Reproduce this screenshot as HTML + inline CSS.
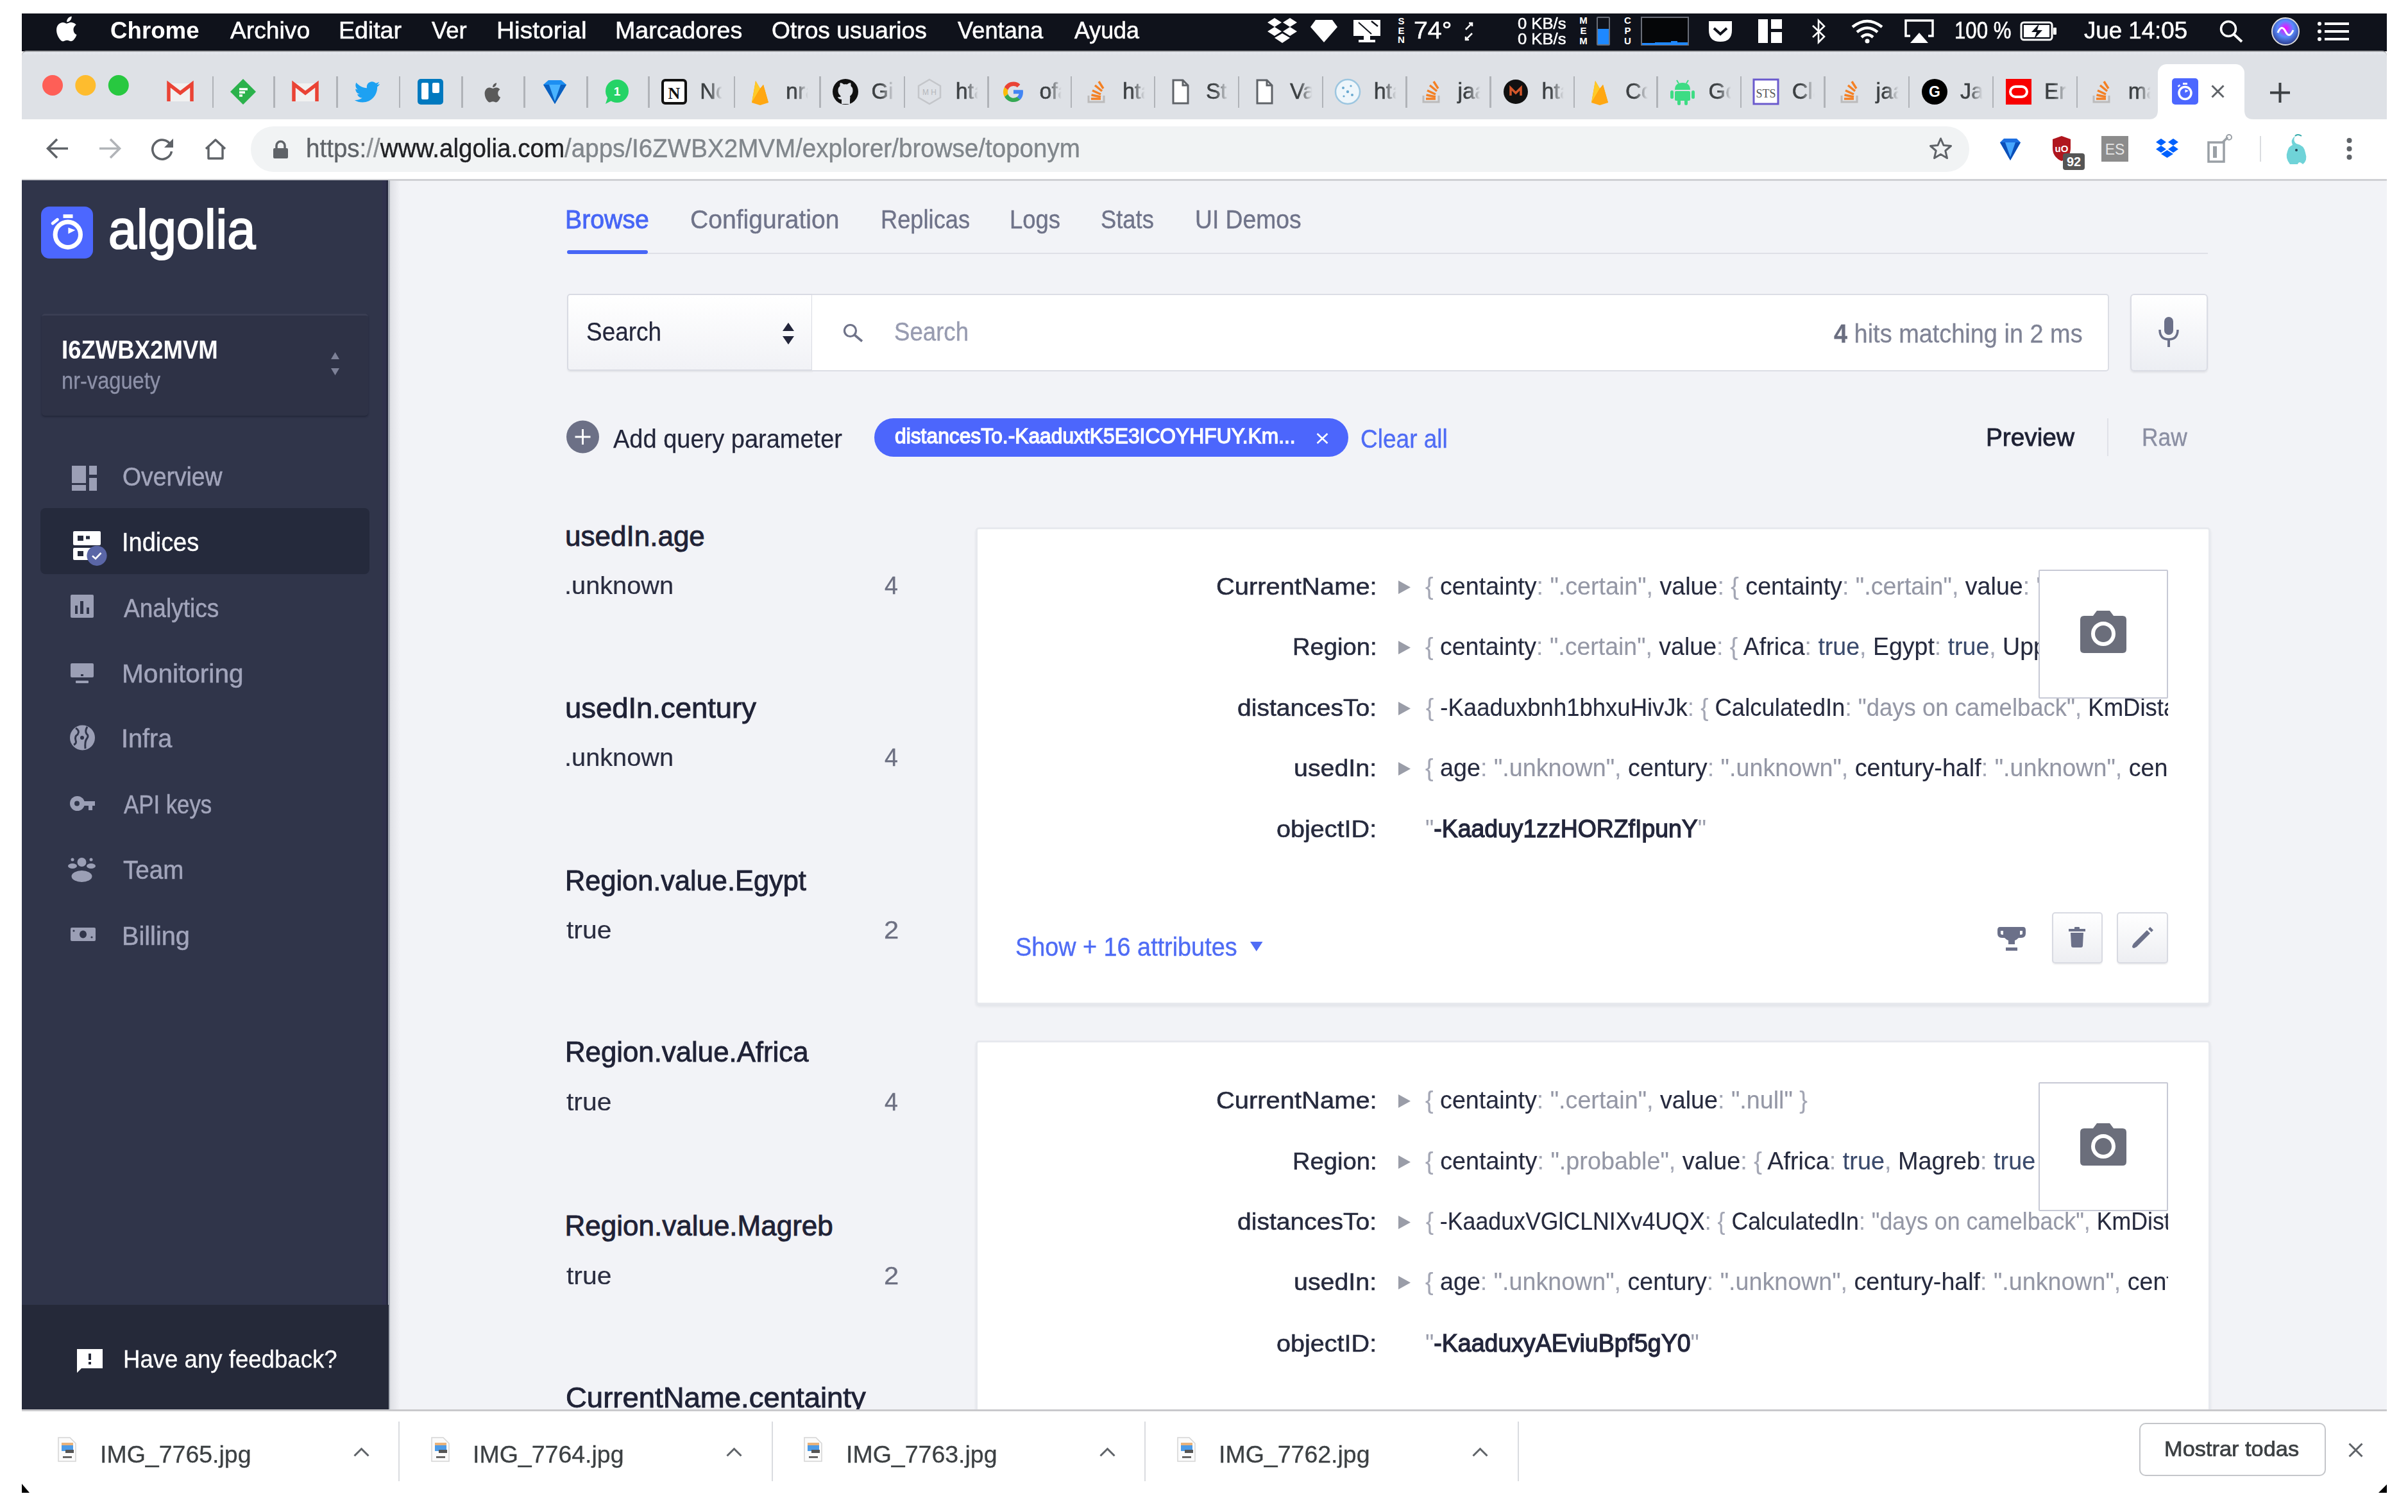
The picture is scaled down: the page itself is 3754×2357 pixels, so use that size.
<!DOCTYPE html>
<html><head><meta charset="utf-8"><style>
html,body{margin:0;padding:0;}
body{width:3754px;height:2357px;position:relative;overflow:hidden;background:#fff;font-family:"Liberation Sans",sans-serif;}
.t{position:absolute;white-space:nowrap;transform-origin:0 0;}
svg{overflow:visible}
</style></head><body>
<div style="position:absolute;left:34.0px;top:21.0px;width:3687.0px;height:59.0px;background:#0f121b;"></div>
<div style="position:absolute;left:34.0px;top:78.5px;width:3687.0px;height:107.5px;background:#a3a5a8;border-radius:7px 7px 0 0;"></div>
<div style="position:absolute;left:34.0px;top:80.5px;width:3687.0px;height:105.5px;background:linear-gradient(#e6e9ef,#dee1e6 5px);border-radius:6px 6px 0 0;"></div>
<div style="position:absolute;left:34.0px;top:186.0px;width:3687.0px;height:94.0px;background:#fff;"></div>
<div style="position:absolute;left:34.0px;top:279.0px;width:3687.0px;height:3.0px;background:#cfd0d4;"></div>
<div style="position:absolute;left:606.0px;top:282.0px;width:3115.0px;height:1916.0px;background:#f2f3f7;"></div>
<div style="position:absolute;left:34.0px;top:281.0px;width:572.0px;height:1917.0px;background:#30354a;"></div>
<div style="position:absolute;left:596.0px;top:281.0px;width:6.0px;height:1917.0px;background:#30324d;"></div>
<div style="position:absolute;left:602.0px;top:281.0px;width:3.0px;height:1917.0px;background:#272a40;"></div>
<div style="position:absolute;left:605.0px;top:281.0px;width:3.0px;height:1917.0px;background:#a7adb6;"></div>
<div style="position:absolute;left:608.0px;top:282.0px;width:16.0px;height:1916.0px;background:linear-gradient(90deg,rgba(20,24,40,.09),rgba(20,24,40,0));"></div>
<div style="position:absolute;left:34.0px;top:2034.0px;width:572.0px;height:164.0px;background:#252939;"></div>
<svg style="position:absolute;left:86.0px;top:24.0px;" width="35.0" height="42.0" viewBox="0 0 35 42"><path fill="#fff" d="M28.5 22.3c0-5 4-7.4 4.2-7.5-2.3-3.4-5.9-3.8-7.1-3.9-3-.3-5.9 1.8-7.4 1.8-1.5 0-3.9-1.7-6.4-1.7C8.5 11.1 5.4 13 3.7 16c-3.4 5.9-.9 14.7 2.4 19.5 1.6 2.3 3.5 5 6.1 4.9 2.4-.1 3.4-1.6 6.3-1.6 2.9 0 3.8 1.6 6.4 1.5 2.6 0 4.3-2.4 5.9-4.7 1.9-2.7 2.6-5.3 2.7-5.4-.1 0-5-1.9-5-7.9zM23.7 7.6c1.3-1.6 2.2-3.8 2-6.1-1.9.1-4.2 1.3-5.6 2.9-1.2 1.4-2.3 3.7-2 5.9 2.1.2 4.3-1.1 5.6-2.7z"/></svg>
<div class="t" style="left:172.1px;top:29.4px;font-size:37.80px;line-height:37.80px;color:#fff;font-weight:bold;transform:scaleX(0.9710);">Chrome</div>
<div class="t" style="left:359.0px;top:29.4px;font-size:37.80px;line-height:37.80px;color:#fff;-webkit-text-stroke-width:0.6px;transform:scaleX(0.9851);">Archivo</div>
<div class="t" style="left:527.7px;top:29.4px;font-size:37.80px;line-height:37.80px;color:#fff;-webkit-text-stroke-width:0.6px;transform:scaleX(0.9919);">Editar</div>
<div class="t" style="left:673.4px;top:29.4px;font-size:37.80px;line-height:37.80px;color:#fff;-webkit-text-stroke-width:0.6px;transform:scaleX(0.9653);">Ver</div>
<div class="t" style="left:773.5px;top:29.4px;font-size:37.80px;line-height:37.80px;color:#fff;-webkit-text-stroke-width:0.6px;transform:scaleX(1.0300);">Historial</div>
<div class="t" style="left:958.5px;top:29.4px;font-size:37.80px;line-height:37.80px;color:#fff;-webkit-text-stroke-width:0.6px;transform:scaleX(0.9932);">Marcadores</div>
<div class="t" style="left:1203.3px;top:29.4px;font-size:37.80px;line-height:37.80px;color:#fff;-webkit-text-stroke-width:0.6px;transform:scaleX(0.9841);">Otros usuarios</div>
<div class="t" style="left:1492.8px;top:29.4px;font-size:37.80px;line-height:37.80px;color:#fff;-webkit-text-stroke-width:0.6px;transform:scaleX(0.9600);">Ventana</div>
<div class="t" style="left:1674.5px;top:29.4px;font-size:37.80px;line-height:37.80px;color:#fff;-webkit-text-stroke-width:0.6px;transform:scaleX(0.9482);">Ayuda</div>
<svg style="position:absolute;left:1974.6px;top:27.0px;" width="48.0" height="42.0" viewBox="0 0 48 42"><g fill="#fff"><path d="M12 1L1 8L12 15L23 8Z"/><path d="M36 1L25 8L36 15L47 8Z"/><path d="M1 22L12 29L23 22L12 15Z"/><path d="M47 22L36 29L25 22L36 15Z"/><path d="M12 32L24 40L36 32L24 25Z"/></g></svg>
<svg style="position:absolute;left:2043.0px;top:30.0px;" width="42.0" height="36.0" viewBox="0 0 42 36"><path d="M8 1H34L42 12L21 36L0 12Z" fill="#fff"/></svg>
<svg style="position:absolute;left:2107.5px;top:29.0px;" width="46.0" height="38.0" viewBox="0 0 46 38"><path d="M2 2H44V27H2Z" fill="#fff"/><path d="M18 27H28V33H36V37H10V33H18Z" fill="#fff"/><path d="M10 6L30 24" stroke="#0f121b" stroke-width="2"/><path d="M30 4L40 12" stroke="#0f121b" stroke-width="2.5"/></svg>
<div class="t" style="left:2176px;top:26px;font-size:15px;line-height:14.5px;color:#fff;font-weight:bold;width:17px;text-align:center;white-space:normal;">S<br>E<br>N</div>
<div class="t" style="left:2204.0px;top:29.4px;font-size:37.80px;line-height:37.80px;color:#fff;-webkit-text-stroke-width:0.6px;transform:scaleX(1.0393);">74°</div>
<svg style="position:absolute;left:2282.0px;top:34.0px;" width="16.0" height="30.0" viewBox="0 0 16 30"><path d="M3 12L13 2M8 2H13V7M13 18L3 28M3 23V28H8" fill="none" stroke="#fff" stroke-width="2.5"/></svg>
<div class="t" style="left:2366.0px;top:26.2px;font-size:23.00px;line-height:23.00px;color:#fff;-webkit-text-stroke-width:0.5px;transform:scaleX(1.1135);">0 KB/s</div>
<div class="t" style="left:2366.0px;top:50.2px;font-size:23.00px;line-height:23.00px;color:#fff;-webkit-text-stroke-width:0.5px;transform:scaleX(1.1135);">0 KB/s</div>
<div class="t" style="left:2460px;top:24px;font-size:15px;line-height:16px;color:#fff;font-weight:bold;width:17px;text-align:center;white-space:normal;">M<br>E<br>M</div>
<div style="position:absolute;left:2488.7px;top:25.7px;width:21.3px;height:45.7px;border:2px solid #6a6e78;box-sizing:border-box;border-radius:2px;"></div>
<div style="position:absolute;left:2491.0px;top:45.0px;width:17.0px;height:24.0px;background:#1e88ff;"></div>
<div class="t" style="left:2530px;top:24px;font-size:15px;line-height:16px;color:#fff;font-weight:bold;width:15px;text-align:center;white-space:normal;">C<br>P<br>U</div>
<div style="position:absolute;left:2558.0px;top:25.7px;width:75.0px;height:45.7px;border:2px solid #6a6e78;box-sizing:border-box;background:#050608;"></div>
<svg style="position:absolute;left:2560.0px;top:62.0px;" width="71.0" height="8.0" viewBox="0 0 71 8"><path d="M0 8V5H20V4H45V2H55V4H71V8Z" fill="#1e88ff"/></svg>
<svg style="position:absolute;left:2662.0px;top:31.0px;" width="40.0" height="36.0" viewBox="0 0 40 36"><path d="M2 2H38V16Q38 34 20 34Q2 34 2 16Z" fill="#fff"/><path d="M10 13L20 22L30 13" fill="none" stroke="#0f121b" stroke-width="4"/></svg>
<svg style="position:absolute;left:2741.0px;top:30.0px;" width="37.0" height="37.0" viewBox="0 0 37 37"><g fill="#fff"><rect x="0" y="0" width="15" height="37"/><rect x="20" y="0" width="17" height="15"/><rect x="20" y="20" width="17" height="17"/></g></svg>
<svg style="position:absolute;left:2822.5px;top:30.0px;" width="25.0" height="38.0" viewBox="0 0 25 38"><path d="M3 10L21 27L12 36V2L21 11L3 28" fill="none" stroke="#fff" stroke-width="2.6"/></svg>
<svg style="position:absolute;left:2884.8px;top:30.0px;" width="52.0" height="38.0" viewBox="0 0 52 38"><g fill="none" stroke="#fff" stroke-width="4.5"><path d="M3 12Q26 -6 49 12"/><path d="M10 20Q26 7 42 20"/><path d="M17 28Q26 20 35 28"/></g><circle cx="26" cy="34" r="3.5" fill="#fff"/></svg>
<svg style="position:absolute;left:2968.0px;top:30.0px;" width="48.0" height="37.0" viewBox="0 0 48 37"><path d="M10 26H3V2H45V26H38" fill="none" stroke="#fff" stroke-width="3.5"/><path d="M10 37L24 21L38 37Z" fill="#fff"/></svg>
<div class="t" style="left:3046.7px;top:29.4px;font-size:37.80px;line-height:37.80px;color:#fff;-webkit-text-stroke-width:0.6px;transform:scaleX(0.8252);">100 %</div>
<svg style="position:absolute;left:3148.5px;top:33.0px;" width="58.0" height="31.0" viewBox="0 0 58 31"><rect x="2" y="2" width="48" height="27" rx="4" fill="none" stroke="#fff" stroke-width="3"/><rect x="52" y="10" width="5" height="11" rx="1" fill="#fff"/><rect x="6" y="6" width="40" height="19" fill="#fff"/><path d="M30 4L18 17H26L22 28L35 14H27Z" fill="#0f121b"/></svg>
<div class="t" style="left:3249.4px;top:29.4px;font-size:37.80px;line-height:37.80px;color:#fff;-webkit-text-stroke-width:0.6px;transform:scaleX(0.9703);">Jue 14:05</div>
<svg style="position:absolute;left:3460.0px;top:31.0px;" width="37.0" height="35.0" viewBox="0 0 37 35"><circle cx="14" cy="14" r="11.5" fill="none" stroke="#fff" stroke-width="3.5"/><path d="M22 22L35 34" stroke="#fff" stroke-width="4"/></svg>
<svg style="position:absolute;left:3541.0px;top:27.0px;" width="44.0" height="44.0" viewBox="0 0 44 44"><defs><radialGradient id="siri" cx="50%" cy="40%" r="60%"><stop offset="0" stop-color="#f0f"/><stop offset=".5" stop-color="#5a8cff"/><stop offset="1" stop-color="#2a3a8a"/></radialGradient></defs><circle cx="22" cy="22" r="21" fill="url(#siri)" stroke="#ddd" stroke-width="2"/><path d="M10 24Q16 10 22 22T34 20" fill="none" stroke="#fff" stroke-width="3"/></svg>
<svg style="position:absolute;left:3612.8px;top:34.0px;" width="49.0" height="30.0" viewBox="0 0 49 30"><g fill="#fff"><circle cx="3" cy="3" r="3"/><circle cx="3" cy="15" r="3"/><circle cx="3" cy="27" r="3"/><rect x="11" y="1" width="38" height="4"/><rect x="11" y="13" width="38" height="4"/><rect x="11" y="25" width="38" height="4"/></g></svg>
<svg style="position:absolute;left:65.7px;top:117.0px;" width="120.0" height="32.0" viewBox="0 0 120 32"><circle cx="16" cy="16" r="16" fill="#fe5f57"/><circle cx="67.3" cy="16" r="16" fill="#febc2e"/><circle cx="118.8" cy="16" r="16" fill="#28c840"/></svg>
<div style="position:absolute;left:330.7px;top:119.0px;width:2.6px;height:49.0px;background:#b0b3b8;"></div>
<div style="position:absolute;left:426.4px;top:119.0px;width:2.6px;height:49.0px;background:#b0b3b8;"></div>
<div style="position:absolute;left:524.0px;top:119.0px;width:2.6px;height:49.0px;background:#b0b3b8;"></div>
<div style="position:absolute;left:621.7px;top:119.0px;width:2.6px;height:49.0px;background:#b0b3b8;"></div>
<div style="position:absolute;left:719.2px;top:119.0px;width:2.6px;height:49.0px;background:#b0b3b8;"></div>
<div style="position:absolute;left:816.0px;top:119.0px;width:2.6px;height:49.0px;background:#b0b3b8;"></div>
<div style="position:absolute;left:914.4px;top:119.0px;width:2.6px;height:49.0px;background:#b0b3b8;"></div>
<div style="position:absolute;left:1010.0px;top:119.0px;width:2.6px;height:49.0px;background:#b0b3b8;"></div>
<svg style="position:absolute;left:260.0px;top:122.0px;" width="42.0" height="42.0" viewBox="0 0 42 42"><path d="M3 8H39V36H3Z" fill="#f1f1f1"/><path d="M3 36V9L21 23L39 9V36" fill="none" stroke="#ea4335" stroke-width="5.5" stroke-linejoin="miter"/></svg>
<svg style="position:absolute;left:357.7px;top:122.0px;" width="42.0" height="42.0" viewBox="0 0 42 42"><path d="M21 1L41 21L21 41L1 21Z" fill="#2bb24c" transform="translate(0,0) scale(1)"/><path d="M15 27H20M15 22H24M15 17H28" stroke="#fff" stroke-width="3.5"/></svg>
<svg style="position:absolute;left:455.0px;top:122.0px;" width="42.0" height="42.0" viewBox="0 0 42 42"><path d="M3 8H39V36H3Z" fill="#f1f1f1"/><path d="M3 36V9L21 23L39 9V36" fill="none" stroke="#ea4335" stroke-width="5.5" stroke-linejoin="miter"/></svg>
<svg style="position:absolute;left:551.5px;top:122.0px;" width="42.0" height="42.0" viewBox="0 0 42 42"><path d="M40 9c-1.4.6-3 1-4.6 1.2 1.7-1 2.9-2.6 3.5-4.4-1.5.9-3.3 1.6-5.1 2-1.5-1.6-3.6-2.5-5.9-2.5-4.4 0-8.1 3.6-8.1 8.1 0 .6.1 1.2.2 1.8C13.3 14.9 7.4 11.7 3.4 6.8c-.7 1.2-1.1 2.6-1.1 4.1 0 2.8 1.4 5.3 3.6 6.7-1.3 0-2.6-.4-3.7-1v.1c0 3.9 2.8 7.2 6.5 8-.7.2-1.4.3-2.1.3-.5 0-1-.1-1.5-.1 1 3.2 4 5.6 7.6 5.6-2.8 2.2-6.3 3.5-10.1 3.5-.7 0-1.3 0-1.9-.1 3.6 2.3 7.8 3.6 12.4 3.6 14.9 0 23-12.3 23-23v-1c1.6-1.1 2.9-2.6 4-4.2z" fill="#1da1f2"/></svg>
<svg style="position:absolute;left:649.7px;top:122.0px;" width="42.0" height="42.0" viewBox="0 0 42 42"><rect x="1" y="1" width="40" height="40" rx="5" fill="#0079bf"/><rect x="7" y="7" width="11" height="26" rx="2" fill="#fff"/><rect x="24" y="7" width="11" height="16" rx="2" fill="#fff"/></svg>
<svg style="position:absolute;left:746.6px;top:122.0px;" width="42.0" height="42.0" viewBox="0 0 42 42"><g transform="translate(7,6) scale(0.78)"><path fill="#5a5a5a" d="M28.5 22.3c0-5 4-7.4 4.2-7.5-2.3-3.4-5.9-3.8-7.1-3.9-3-.3-5.9 1.8-7.4 1.8-1.5 0-3.9-1.7-6.4-1.7C8.5 11.1 5.4 13 3.7 16c-3.4 5.9-.9 14.7 2.4 19.5 1.6 2.3 3.5 5 6.1 4.9 2.4-.1 3.4-1.6 6.3-1.6 2.9 0 3.8 1.6 6.4 1.5 2.6 0 4.3-2.4 5.9-4.7 1.9-2.7 2.6-5.3 2.7-5.4-.1 0-5-1.9-5-7.9zM23.7 7.6c1.3-1.6 2.2-3.8 2-6.1-1.9.1-4.2 1.3-5.6 2.9-1.2 1.4-2.3 3.7-2 5.9 2.1.2 4.3-1.1 5.6-2.7z"/></g></svg>
<svg style="position:absolute;left:843.7px;top:122.0px;" width="42.0" height="42.0" viewBox="0 0 42 42"><path d="M3 10L11 3H31L39 10L21 40Z" fill="#1d8ff2"/><path d="M3 10H39L21 40Z" fill="#0a5fbf"/><path d="M12 10L21 36L30 10" fill="#49b3ff"/></svg>
<svg style="position:absolute;left:939.5px;top:122.0px;" width="42.0" height="42.0" viewBox="0 0 42 42"><circle cx="22" cy="20" r="18" fill="#25d366"/><path d="M4 40L8 28L15 34Z" fill="#25d366"/><text x="22" y="27" font-size="19" font-weight="bold" fill="#fff" text-anchor="middle" font-family="Liberation Sans">1</text></svg>
<svg style="position:absolute;left:1029.8px;top:122.0px;" width="42.0" height="42.0" viewBox="0 0 42 42"><rect x="3" y="3" width="36" height="36" rx="4" fill="#fff" stroke="#111" stroke-width="4"/><text x="21" y="32" font-size="26" font-weight="bold" fill="#111" text-anchor="middle" font-family="Liberation Serif">N</text></svg>
<div style="position:absolute;left:1089.3px;top:120px;width:40px;height:46px;overflow:hidden;-webkit-mask-image:linear-gradient(90deg,#000 40%,transparent 92%);"><div class="t" style="left:2px;top:4.5px;font-size:34.3px;line-height:34.3px;color:#3c4043;-webkit-text-stroke-width:0.6px;">Ncabcd</div></div>
<div style="position:absolute;left:1143.7px;top:119.0px;width:2.6px;height:49.0px;background:#b0b3b8;"></div>
<svg style="position:absolute;left:1163.5px;top:122.0px;" width="42.0" height="42.0" viewBox="0 0 42 42"><path d="M8 38L14 4L21 16L26 10L34 38Z" fill="#ffa000"/><path d="M8 38L14 4L21 16Z" fill="#ffca28"/><path d="M8 38L26 10L34 38L21 42Z" fill="#ffa712"/></svg>
<div style="position:absolute;left:1223.0px;top:120px;width:40px;height:46px;overflow:hidden;-webkit-mask-image:linear-gradient(90deg,#000 40%,transparent 92%);"><div class="t" style="left:2px;top:4.5px;font-size:34.3px;line-height:34.3px;color:#3c4043;-webkit-text-stroke-width:0.6px;">nrabcd</div></div>
<div style="position:absolute;left:1277.2px;top:119.0px;width:2.6px;height:49.0px;background:#b0b3b8;"></div>
<svg style="position:absolute;left:1297.0px;top:122.0px;" width="42.0" height="42.0" viewBox="0 0 42 42"><circle cx="21" cy="21" r="20" fill="#111"/><path d="M15 40V33Q10 33 9 29Q13 30 14 28Q9 24 9.5 18Q10 14 12.5 12Q12 9 13 7Q16 7 18.5 9.5Q21 9 23.5 9.5Q26 7 29 7Q30 9 29.5 12Q32 14 32.5 18Q33 24 28 28Q29 30 28 33V40Z" fill="#dee1e6"/></svg>
<div style="position:absolute;left:1356.5px;top:120px;width:40px;height:46px;overflow:hidden;-webkit-mask-image:linear-gradient(90deg,#000 40%,transparent 92%);"><div class="t" style="left:2px;top:4.5px;font-size:34.3px;line-height:34.3px;color:#3c4043;-webkit-text-stroke-width:0.6px;">Giabcd</div></div>
<div style="position:absolute;left:1408.5px;top:119.0px;width:2.6px;height:49.0px;background:#b0b3b8;"></div>
<svg style="position:absolute;left:1428.3px;top:122.0px;" width="42.0" height="42.0" viewBox="0 0 42 42"><path d="M21 2L38 12V30L21 40L4 30V12Z" fill="none" stroke="#c4c6ca" stroke-width="2.5"/><text x="21" y="26" font-size="12" fill="#b5b7bb" text-anchor="middle" font-family="Liberation Sans">M H</text></svg>
<div style="position:absolute;left:1487.8px;top:120px;width:40px;height:46px;overflow:hidden;-webkit-mask-image:linear-gradient(90deg,#000 40%,transparent 92%);"><div class="t" style="left:2px;top:4.5px;font-size:34.3px;line-height:34.3px;color:#3c4043;-webkit-text-stroke-width:0.6px;">htabcd</div></div>
<div style="position:absolute;left:1539.1px;top:119.0px;width:2.6px;height:49.0px;background:#b0b3b8;"></div>
<svg style="position:absolute;left:1558.9px;top:122.0px;" width="42.0" height="42.0" viewBox="0 0 42 42"><path d="M36 21.5c0-1.3-.1-2.3-.3-3.3H21v6.1h8.5c-.4 2.2-1.6 3.9-3.4 5.1l5.3 4.1c3.1-2.9 4.6-7.1 4.6-12z" fill="#4285f4"/><path d="M21 37c4.2 0 7.8-1.4 10.4-3.8l-5.3-4.1c-1.4 1-3.2 1.6-5.1 1.6-4 0-7.4-2.7-8.6-6.3l-5.5 4.3C9.6 33.8 14.9 37 21 37z" fill="#34a853"/><path d="M12.4 24.4c-.3-1-.5-2-.5-3.1s.2-2.1.5-3.1L6.9 14C5.7 16.3 5 18.8 5 21.4s.7 5 1.9 7.3z" fill="#fbbc05"/><path d="M21 11.9c2.3 0 4.3.8 5.9 2.3l4.5-4.5C28.7 7.1 25.2 5.6 21 5.6 14.9 5.6 9.6 8.9 6.9 14l5.5 4.3c1.2-3.6 4.6-6.4 8.6-6.4z" fill="#ea4335"/></svg>
<div style="position:absolute;left:1618.4px;top:120px;width:40px;height:46px;overflow:hidden;-webkit-mask-image:linear-gradient(90deg,#000 40%,transparent 92%);"><div class="t" style="left:2px;top:4.5px;font-size:34.3px;line-height:34.3px;color:#3c4043;-webkit-text-stroke-width:0.6px;">ofabcd</div></div>
<div style="position:absolute;left:1668.7px;top:119.0px;width:2.6px;height:49.0px;background:#b0b3b8;"></div>
<svg style="position:absolute;left:1688.5px;top:122.0px;" width="42.0" height="42.0" viewBox="0 0 42 42"><path d="M8 27V37H32V27" fill="none" stroke="#bcbbbb" stroke-width="3"/><g stroke="#f48024" stroke-width="3.5"><path d="M12 32H27"/><path d="M12.5 26L27 29"/><path d="M14 19L27 25"/><path d="M18 11L29 20"/><path d="M24 5L31 16"/></g></svg>
<div style="position:absolute;left:1748.0px;top:120px;width:40px;height:46px;overflow:hidden;-webkit-mask-image:linear-gradient(90deg,#000 40%,transparent 92%);"><div class="t" style="left:2px;top:4.5px;font-size:34.3px;line-height:34.3px;color:#3c4043;-webkit-text-stroke-width:0.6px;">htabcd</div></div>
<div style="position:absolute;left:1798.7px;top:119.0px;width:2.6px;height:49.0px;background:#b0b3b8;"></div>
<svg style="position:absolute;left:1818.5px;top:122.0px;" width="42.0" height="42.0" viewBox="0 0 42 42"><path d="M10 3H25L33 11V39H10Z" fill="#fff" stroke="#5f6368" stroke-width="3"/><path d="M25 3V11H33" fill="none" stroke="#5f6368" stroke-width="3"/></svg>
<div style="position:absolute;left:1878.0px;top:120px;width:40px;height:46px;overflow:hidden;-webkit-mask-image:linear-gradient(90deg,#000 40%,transparent 92%);"><div class="t" style="left:2px;top:4.5px;font-size:34.3px;line-height:34.3px;color:#3c4043;-webkit-text-stroke-width:0.6px;">Stabcd</div></div>
<div style="position:absolute;left:1929.7px;top:119.0px;width:2.6px;height:49.0px;background:#b0b3b8;"></div>
<svg style="position:absolute;left:1949.5px;top:122.0px;" width="42.0" height="42.0" viewBox="0 0 42 42"><path d="M10 3H25L33 11V39H10Z" fill="#fff" stroke="#5f6368" stroke-width="3"/><path d="M25 3V11H33" fill="none" stroke="#5f6368" stroke-width="3"/></svg>
<div style="position:absolute;left:2009.0px;top:120px;width:40px;height:46px;overflow:hidden;-webkit-mask-image:linear-gradient(90deg,#000 40%,transparent 92%);"><div class="t" style="left:2px;top:4.5px;font-size:34.3px;line-height:34.3px;color:#3c4043;-webkit-text-stroke-width:0.6px;">Vaabcd</div></div>
<div style="position:absolute;left:2060.5px;top:119.0px;width:2.6px;height:49.0px;background:#b0b3b8;"></div>
<svg style="position:absolute;left:2080.3px;top:122.0px;" width="42.0" height="42.0" viewBox="0 0 42 42"><circle cx="21" cy="21" r="19" fill="#eef6fb" stroke="#9cc6e0" stroke-width="2.5"/><g fill="#6aa9d0"><circle cx="14" cy="15" r="2"/><circle cx="26" cy="12" r="1.6"/><circle cx="28" cy="26" r="2"/><circle cx="15" cy="28" r="1.6"/><circle cx="21" cy="21" r="2.2"/></g></svg>
<div style="position:absolute;left:2139.8px;top:120px;width:40px;height:46px;overflow:hidden;-webkit-mask-image:linear-gradient(90deg,#000 40%,transparent 92%);"><div class="t" style="left:2px;top:4.5px;font-size:34.3px;line-height:34.3px;color:#3c4043;-webkit-text-stroke-width:0.6px;">htabcd</div></div>
<div style="position:absolute;left:2191.3px;top:119.0px;width:2.6px;height:49.0px;background:#b0b3b8;"></div>
<svg style="position:absolute;left:2211.1px;top:122.0px;" width="42.0" height="42.0" viewBox="0 0 42 42"><path d="M8 27V37H32V27" fill="none" stroke="#bcbbbb" stroke-width="3"/><g stroke="#f48024" stroke-width="3.5"><path d="M12 32H27"/><path d="M12.5 26L27 29"/><path d="M14 19L27 25"/><path d="M18 11L29 20"/><path d="M24 5L31 16"/></g></svg>
<div style="position:absolute;left:2270.6px;top:120px;width:40px;height:46px;overflow:hidden;-webkit-mask-image:linear-gradient(90deg,#000 40%,transparent 92%);"><div class="t" style="left:2px;top:4.5px;font-size:34.3px;line-height:34.3px;color:#3c4043;-webkit-text-stroke-width:0.6px;">jaabcd</div></div>
<div style="position:absolute;left:2322.1px;top:119.0px;width:2.6px;height:49.0px;background:#b0b3b8;"></div>
<svg style="position:absolute;left:2341.9px;top:122.0px;" width="42.0" height="42.0" viewBox="0 0 42 42"><circle cx="21" cy="21" r="19" fill="#111"/><path d="M13 27V15L21 23L29 15V27" fill="none" stroke="#d4572a" stroke-width="3.5"/></svg>
<div style="position:absolute;left:2401.4px;top:120px;width:40px;height:46px;overflow:hidden;-webkit-mask-image:linear-gradient(90deg,#000 40%,transparent 92%);"><div class="t" style="left:2px;top:4.5px;font-size:34.3px;line-height:34.3px;color:#3c4043;-webkit-text-stroke-width:0.6px;">htabcd</div></div>
<div style="position:absolute;left:2452.7px;top:119.0px;width:2.6px;height:49.0px;background:#b0b3b8;"></div>
<svg style="position:absolute;left:2472.5px;top:122.0px;" width="42.0" height="42.0" viewBox="0 0 42 42"><path d="M8 38L14 4L21 16L26 10L34 38Z" fill="#ffa000"/><path d="M8 38L14 4L21 16Z" fill="#ffca28"/><path d="M8 38L26 10L34 38L21 42Z" fill="#ffa712"/></svg>
<div style="position:absolute;left:2532.0px;top:120px;width:40px;height:46px;overflow:hidden;-webkit-mask-image:linear-gradient(90deg,#000 40%,transparent 92%);"><div class="t" style="left:2px;top:4.5px;font-size:34.3px;line-height:34.3px;color:#3c4043;-webkit-text-stroke-width:0.6px;">Ccabcd</div></div>
<div style="position:absolute;left:2582.2px;top:119.0px;width:2.6px;height:49.0px;background:#b0b3b8;"></div>
<svg style="position:absolute;left:2602.0px;top:122.0px;" width="42.0" height="42.0" viewBox="0 0 42 42"><g fill="#3ddc84"><path d="M9 18Q9 7 21 7Q33 7 33 18Z"/><rect x="9" y="20" width="24" height="15" rx="2"/><rect x="2" y="19" width="5" height="13" rx="2.5"/><rect x="35" y="19" width="5" height="13" rx="2.5"/><rect x="13" y="33" width="5" height="9" rx="2.5"/><rect x="24" y="33" width="5" height="9" rx="2.5"/><path d="M12 3L15 8M30 3L27 8" stroke="#3ddc84" stroke-width="2"/></g></svg>
<div style="position:absolute;left:2661.5px;top:120px;width:40px;height:46px;overflow:hidden;-webkit-mask-image:linear-gradient(90deg,#000 40%,transparent 92%);"><div class="t" style="left:2px;top:4.5px;font-size:34.3px;line-height:34.3px;color:#3c4043;-webkit-text-stroke-width:0.6px;">Gcabcd</div></div>
<div style="position:absolute;left:2712.5px;top:119.0px;width:2.6px;height:49.0px;background:#b0b3b8;"></div>
<svg style="position:absolute;left:2732.3px;top:122.0px;" width="42.0" height="42.0" viewBox="0 0 42 42"><rect x="2" y="2" width="38" height="38" fill="#fff" stroke="#6a5acd" stroke-width="3"/><text x="21" y="30" font-size="18" fill="#555" text-anchor="middle" font-family="Liberation Serif">STS</text></svg>
<div style="position:absolute;left:2791.8px;top:120px;width:40px;height:46px;overflow:hidden;-webkit-mask-image:linear-gradient(90deg,#000 40%,transparent 92%);"><div class="t" style="left:2px;top:4.5px;font-size:34.3px;line-height:34.3px;color:#3c4043;-webkit-text-stroke-width:0.6px;">Clabcd</div></div>
<div style="position:absolute;left:2843.3px;top:119.0px;width:2.6px;height:49.0px;background:#b0b3b8;"></div>
<svg style="position:absolute;left:2863.1px;top:122.0px;" width="42.0" height="42.0" viewBox="0 0 42 42"><path d="M8 27V37H32V27" fill="none" stroke="#bcbbbb" stroke-width="3"/><g stroke="#f48024" stroke-width="3.5"><path d="M12 32H27"/><path d="M12.5 26L27 29"/><path d="M14 19L27 25"/><path d="M18 11L29 20"/><path d="M24 5L31 16"/></g></svg>
<div style="position:absolute;left:2922.6px;top:120px;width:40px;height:46px;overflow:hidden;-webkit-mask-image:linear-gradient(90deg,#000 40%,transparent 92%);"><div class="t" style="left:2px;top:4.5px;font-size:34.3px;line-height:34.3px;color:#3c4043;-webkit-text-stroke-width:0.6px;">jaabcd</div></div>
<div style="position:absolute;left:2974.7px;top:119.0px;width:2.6px;height:49.0px;background:#b0b3b8;"></div>
<svg style="position:absolute;left:2994.5px;top:122.0px;" width="42.0" height="42.0" viewBox="0 0 42 42"><circle cx="21" cy="21" r="20" fill="#000"/><text x="21" y="29" font-size="23" font-weight="bold" fill="#fff" text-anchor="middle" font-family="Liberation Sans">G</text></svg>
<div style="position:absolute;left:3054.0px;top:120px;width:40px;height:46px;overflow:hidden;-webkit-mask-image:linear-gradient(90deg,#000 40%,transparent 92%);"><div class="t" style="left:2px;top:4.5px;font-size:34.3px;line-height:34.3px;color:#3c4043;-webkit-text-stroke-width:0.6px;">Jaabcd</div></div>
<div style="position:absolute;left:3105.7px;top:119.0px;width:2.6px;height:49.0px;background:#b0b3b8;"></div>
<svg style="position:absolute;left:3125.5px;top:122.0px;" width="42.0" height="42.0" viewBox="0 0 42 42"><rect x="1" y="1" width="40" height="40" fill="#f80000"/><rect x="8" y="13" width="26" height="16" rx="8" fill="none" stroke="#fff" stroke-width="4"/></svg>
<div style="position:absolute;left:3185.0px;top:120px;width:40px;height:46px;overflow:hidden;-webkit-mask-image:linear-gradient(90deg,#000 40%,transparent 92%);"><div class="t" style="left:2px;top:4.5px;font-size:34.3px;line-height:34.3px;color:#3c4043;-webkit-text-stroke-width:0.6px;">Erabcd</div></div>
<div style="position:absolute;left:3236.5px;top:119.0px;width:2.6px;height:49.0px;background:#b0b3b8;"></div>
<svg style="position:absolute;left:3256.3px;top:122.0px;" width="42.0" height="42.0" viewBox="0 0 42 42"><path d="M8 27V37H32V27" fill="none" stroke="#bcbbbb" stroke-width="3"/><g stroke="#f48024" stroke-width="3.5"><path d="M12 32H27"/><path d="M12.5 26L27 29"/><path d="M14 19L27 25"/><path d="M18 11L29 20"/><path d="M24 5L31 16"/></g></svg>
<div style="position:absolute;left:3315.8px;top:120px;width:40px;height:46px;overflow:hidden;-webkit-mask-image:linear-gradient(90deg,#000 40%,transparent 92%);"><div class="t" style="left:2px;top:4.5px;font-size:34.3px;line-height:34.3px;color:#3c4043;-webkit-text-stroke-width:0.6px;">mabcd</div></div>
<div style="position:absolute;left:3364px;top:100px;width:135px;height:86px;background:#fff;border-radius:14px 14px 0 0;"></div>
<svg style="position:absolute;left:3350.0px;top:172.0px;" width="14.0" height="14.0" viewBox="0 0 14 14"><path d="M0 14Q14 14 14 0V14Z" fill="#fff"/></svg>
<svg style="position:absolute;left:3499.0px;top:172.0px;" width="14.0" height="14.0" viewBox="0 0 14 14"><path d="M0 0Q0 14 14 14H0Z" fill="#fff"/></svg>
<svg style="position:absolute;left:3386.0px;top:121.7px;" width="41.0" height="41.0" viewBox="0 0 41 41"><rect x="0" y="0" width="41" height="41" rx="5" fill="#4c67ff"/><circle cx="20.5" cy="23" r="9.5" fill="none" stroke="#fff" stroke-width="3.5"/><rect x="17" y="7" width="7" height="3" fill="#fff"/><path d="M9.5 13L12.5 10.5" stroke="#fff" stroke-width="2.5"/><path d="M20.5 17.5L26 19.5L20.5 22.5Z" fill="#fff"/></svg>
<svg style="position:absolute;left:3447.0px;top:132.0px;" width="21.0" height="21.0" viewBox="0 0 21 21"><path d="M1.5 1.5L19.5 19.5M19.5 1.5L1.5 19.5" stroke="#5f6368" stroke-width="3"/></svg>
<svg style="position:absolute;left:3539.0px;top:128.7px;" width="31.0" height="31.0" viewBox="0 0 31 31"><path d="M15.5 0V31M0 15.5H31" stroke="#3c4043" stroke-width="4"/></svg>
<svg style="position:absolute;left:72.0px;top:215.0px;" width="36.0" height="33.0" viewBox="0 0 36 33"><path d="M34 16.5H4M17 2L2.5 16.5L17 31" fill="none" stroke="#5f6368" stroke-width="3.6"/></svg>
<svg style="position:absolute;left:155.0px;top:215.0px;" width="34.0" height="33.0" viewBox="0 0 34 33"><path d="M0 16.5H30M17 2L31.5 16.5L17 31" fill="none" stroke="#b1b4b8" stroke-width="3.6"/></svg>
<svg style="position:absolute;left:236.0px;top:214.0px;" width="36.0" height="36.0" viewBox="0 0 36 36"><path d="M30 12A15 15 0 1 0 31.5 22" fill="none" stroke="#5f6368" stroke-width="3.6"/><path d="M34 2V16H20Z" fill="#5f6368"/></svg>
<svg style="position:absolute;left:318.7px;top:216.0px;" width="34.0" height="33.0" viewBox="0 0 34 33"><path d="M2 16L17 2L32 16M6 13V31H28V13" fill="none" stroke="#5f6368" stroke-width="3.4" stroke-linejoin="round"/></svg>
<div style="position:absolute;left:391.0px;top:197.4px;width:2679.0px;height:70.3px;background:#f1f3f4;border-radius:35px;"></div>
<svg style="position:absolute;left:425.8px;top:218.6px;" width="23.0" height="28.0" viewBox="0 0 23 28"><path d="M5 12V8A6.5 6.5 0 0 1 18 8V12" fill="none" stroke="#5f6368" stroke-width="3.5"/><rect x="0" y="12" width="23" height="16" rx="2" fill="#5f6368"/></svg>
<div class="t" style="left:477.3px;top:212.2px;font-size:39.80px;line-height:39.80px;color:#202124;-webkit-text-stroke-width:0.4px;transform:scaleX(0.9692);"><span style="color:#5f6368">https:</span><span style="color:#8a8e92">//</span>www.algolia.com<span style="color:#80868b">/apps/I6ZWBX2MVM/explorer/browse/toponym</span></div>
<svg style="position:absolute;left:3008.0px;top:214.0px;" width="35.0" height="35.0" viewBox="0 0 35 35"><path d="M17.5 2L22 12.5L33.5 13.5L24.8 21L27.5 32.5L17.5 26.5L7.5 32.5L10.2 21L1.5 13.5L13 12.5Z" fill="none" stroke="#5f6368" stroke-width="3" stroke-linejoin="round"/></svg>
<svg style="position:absolute;left:3117.0px;top:215.0px;" width="34.0" height="36.0" viewBox="0 0 34 36"><path d="M1 7L7 1H27L33 7L17 35Z" fill="#1d6fe0"/><path d="M1 7H33L17 35Z" fill="#0b4fb8"/><path d="M9 7L17 30L25 7" fill="#47a7ff"/></svg>
<svg style="position:absolute;left:3196.0px;top:211.0px;" width="54.0" height="58.0" viewBox="0 0 54 58"><path d="M4 6L18 1L32 6V20Q32 34 18 40Q4 34 4 20Z" fill="#b0161e"/><text x="18" y="26" font-size="15" font-weight="bold" fill="#fff" text-anchor="middle" font-family="Liberation Sans">uO</text><rect x="20" y="28" width="34" height="26" rx="4" fill="#555"/><text x="37" y="48" font-size="20" font-weight="bold" fill="#fff" text-anchor="middle" font-family="Liberation Sans">92</text></svg>
<svg style="position:absolute;left:3276.0px;top:212.0px;" width="42.0" height="40.0" viewBox="0 0 42 40"><rect width="42" height="40" fill="#8c8c8c"/><text x="21" y="29" font-size="23" fill="#e5e5e5" text-anchor="middle" font-family="Liberation Sans">ES</text></svg>
<svg style="position:absolute;left:3360.0px;top:215.0px;" width="37.0" height="33.0" viewBox="0 0 37 33"><g fill="#0061fe"><path d="M9 1L1 6.5L9 12L17 6.5Z"/><path d="M28 1L20 6.5L28 12L36 6.5Z"/><path d="M1 17.5L9 23L17 17.5L9 12Z"/><path d="M36 17.5L28 23L20 17.5L28 12Z"/><path d="M9 25L18.5 31L28 25L18.5 19Z"/></g></svg>
<svg style="position:absolute;left:3441.0px;top:210.0px;" width="38.0" height="42.0" viewBox="0 0 38 42"><rect x="2" y="12" width="24" height="30" fill="none" stroke="#9aa0a6" stroke-width="3.5"/><rect x="9" y="18" width="6" height="18" fill="#9aa0a6"/><path d="M24 12L32 4" stroke="#9aa0a6" stroke-width="3.5"/><circle cx="34" cy="4" r="4" fill="none" stroke="#9aa0a6" stroke-width="2"/></svg>
<div style="position:absolute;left:3523.0px;top:212.0px;width:2.0px;height:40.0px;background:#dadce0;"></div>
<svg style="position:absolute;left:3559.6px;top:206.0px;" width="40.0" height="52.0" viewBox="0 0 40 52"><path d="M10 50Q2 40 6 30Q8 22 14 20Q10 12 18 6Q14 14 20 18Q32 20 34 32Q38 44 30 50Q24 44 22 50Z" fill="#6fd3d8"/><path d="M18 6Q22 2 28 6" fill="none" stroke="#3aa" stroke-width="2"/><circle cx="20" cy="28" r="2" fill="#245"/></svg>
<svg style="position:absolute;left:3658.0px;top:215.0px;" width="9.0" height="34.0" viewBox="0 0 9 34"><circle cx="4.5" cy="4" r="4" fill="#5f6368"/><circle cx="4.5" cy="17" r="4" fill="#5f6368"/><circle cx="4.5" cy="30" r="4" fill="#5f6368"/></svg>
<div style="position:absolute;left:63.8px;top:321.6px;width:81.7px;height:81.3px;background:#4c67ff;border-radius:13px;"></div>
<svg style="position:absolute;left:63.8px;top:321.6px;" width="82.0" height="82.0" viewBox="0 0 82 82"><g transform="translate(-63.8,-321.6)"><circle cx="105.6" cy="365.3" r="19.7" fill="none" stroke="#fff" stroke-width="7"/><rect x="98.3" y="333.8" width="15" height="5.7" fill="#fff"/><path d="M82 347.7L89.2 342" stroke="#fff" stroke-width="5" stroke-linecap="round"/><path d="M106.2 354.3L117.2 358.3L106.2 364Z" fill="#fff"/></g></svg>
<div class="t" style="left:168.8px;top:313.5px;font-size:86.00px;line-height:86.00px;color:#fff;-webkit-text-stroke-width:2.2px;transform:scaleX(0.9221);">algolia</div>
<div style="position:absolute;left:65.0px;top:489.0px;width:509.0px;height:159.0px;background:#2e3246;border-top:3px solid #3a3e53;border-radius:5px;box-sizing:border-box;box-shadow:0 2px 3px rgba(10,12,25,.35);"></div>
<div class="t" style="left:95.6px;top:525.1px;font-size:41.00px;line-height:41.00px;color:#fff;font-weight:bold;transform:scaleX(0.8920);">I6ZWBX2MVM</div>
<div class="t" style="left:95.9px;top:576.0px;font-size:36.50px;line-height:36.50px;color:#8d91a8;-webkit-text-stroke-width:0.3px;transform:scaleX(0.8936);">nr-vaguety</div>
<svg style="position:absolute;left:516.0px;top:549.0px;" width="13.0" height="36.0" viewBox="0 0 13 36"><path d="M0 11L6.5 0L13 11Z M0 25L6.5 36L13 25Z" fill="#7d8197"/></svg>
<div class="t" style="left:191.3px;top:723.0px;font-size:40.00px;line-height:40.00px;color:#a2a5bb;-webkit-text-stroke-width:0.5px;transform:scaleX(0.9333);">Overview</div>
<div style="position:absolute;left:63.0px;top:792.0px;width:513.0px;height:103.0px;background:#252a3c;border-radius:8px;"></div>
<div class="t" style="left:189.6px;top:825.0px;font-size:40.00px;line-height:40.00px;color:#fff;transform:scaleX(0.9483);-webkit-text-stroke:0.4px #fff;">Indices</div>
<div class="t" style="left:193.0px;top:927.5px;font-size:40.00px;line-height:40.00px;color:#a2a5bb;-webkit-text-stroke-width:0.5px;transform:scaleX(0.9269);">Analytics</div>
<div class="t" style="left:189.8px;top:1030.0px;font-size:40.00px;line-height:40.00px;color:#a2a5bb;-webkit-text-stroke-width:0.5px;transform:scaleX(1.0149);">Monitoring</div>
<div class="t" style="left:189.4px;top:1131.4px;font-size:40.00px;line-height:40.00px;color:#a2a5bb;-webkit-text-stroke-width:0.5px;transform:scaleX(0.9908);">Infra</div>
<div class="t" style="left:193.0px;top:1234.0px;font-size:40.00px;line-height:40.00px;color:#a2a5bb;-webkit-text-stroke-width:0.5px;transform:scaleX(0.8696);">API keys</div>
<div class="t" style="left:192.2px;top:1335.5px;font-size:40.00px;line-height:40.00px;color:#a2a5bb;-webkit-text-stroke-width:0.5px;transform:scaleX(0.9640);">Team</div>
<div class="t" style="left:189.8px;top:1438.5px;font-size:40.00px;line-height:40.00px;color:#a2a5bb;-webkit-text-stroke-width:0.5px;transform:scaleX(0.9921);">Billing</div>
<svg style="position:absolute;left:111.7px;top:725.5px;" width="40.0" height="40.0" viewBox="0 0 40 40"><g fill="#9b9fb5"><rect x="0" y="0" width="22" height="27"/><rect x="27" y="0" width="12" height="14"/><rect x="0" y="30" width="22" height="9"/><rect x="27" y="19" width="12" height="20"/></g></svg>
<svg style="position:absolute;left:113.7px;top:827.9px;" width="56.0" height="56.0" viewBox="0 0 56 56"><rect x="0" y="0" width="43" height="22" rx="2" fill="#fff"/><rect x="7" y="7" width="9" height="8" fill="#252a3c"/><rect x="20" y="7.5" width="6" height="5" fill="#252a3c"/><rect x="0" y="26" width="35" height="19" rx="2" fill="#fff"/><rect x="7" y="31" width="9" height="8" fill="#252a3c"/><circle cx="37" cy="38.3" r="15.6" fill="#5a66a6"/><path d="M30 38.5L35 43L43.5 34" fill="none" stroke="#fff" stroke-width="2.6"/></svg>
<svg style="position:absolute;left:110.0px;top:927.0px;" width="36.0" height="36.0" viewBox="0 0 36 36"><rect width="36" height="36" rx="2" fill="#9b9fb5"/><g fill="#30354a"><rect x="7" y="17" width="4" height="13"/><rect x="15" y="10" width="5" height="20"/><rect x="25" y="20" width="4" height="10"/></g></svg>
<svg style="position:absolute;left:110.0px;top:1034.0px;" width="36.0" height="32.0" viewBox="0 0 36 32"><rect width="36" height="22" rx="2" fill="#9b9fb5"/><rect x="16" y="17" width="4" height="3" fill="#30354a"/><rect x="8" y="27" width="20" height="4" rx="1" fill="#9b9fb5"/></svg>
<svg style="position:absolute;left:108.6px;top:1130.0px;" width="39.0" height="40.0" viewBox="0 0 39 40"><circle cx="19.5" cy="20" r="19.5" fill="#9b9fb5"/><path d="M9 5Q16 9 12 15Q7 18 9 24Q11 29 6 31" fill="none" stroke="#30354a" stroke-width="3"/><path d="M27 3Q23 10 26 14Q30 17 26 22Q23 26 24 37" fill="none" stroke="#30354a" stroke-width="3"/><circle cx="19" cy="20" r="3" fill="#30354a"/></svg>
<svg style="position:absolute;left:109.0px;top:1240.7px;" width="39.0" height="23.0" viewBox="0 0 39 23"><circle cx="11.5" cy="11.5" r="11.5" fill="#9b9fb5"/><circle cx="11" cy="11.5" r="4" fill="#30354a"/><rect x="18" y="8" width="21" height="7" fill="#9b9fb5"/><rect x="29" y="13" width="6" height="9" fill="#9b9fb5"/></svg>
<svg style="position:absolute;left:106.0px;top:1334.6px;" width="43.0" height="40.0" viewBox="0 0 43 40"><g fill="#9b9fb5"><circle cx="21.5" cy="9" r="7"/><ellipse cx="21.5" cy="31" rx="16" ry="9"/><circle cx="7" cy="5" r="2.5"/><ellipse cx="7" cy="15" rx="7" ry="4"/><circle cx="36" cy="5" r="2.5"/><ellipse cx="36" cy="15" rx="7" ry="4"/></g></svg>
<svg style="position:absolute;left:109.5px;top:1445.5px;" width="39.0" height="21.0" viewBox="0 0 39 21"><rect width="39" height="21" rx="2" fill="#9b9fb5"/><ellipse cx="19.5" cy="10.5" rx="5.5" ry="6" fill="#30354a"/><circle cx="5" cy="5" r="1.6" fill="#30354a"/><circle cx="33" cy="15" r="1.6" fill="#30354a"/></svg>
<div class="t" style="left:191.5px;top:2098.8px;font-size:39.00px;line-height:39.00px;color:#fff;transform:scaleX(0.9382);-webkit-text-stroke:0.3px #fff;">Have any feedback?</div>
<svg style="position:absolute;left:120.0px;top:2102.5px;" width="40.0" height="37.0" viewBox="0 0 40 37"><path d="M0 0H40V30H7L0 37Z" fill="#fff"/><rect x="18" y="7" width="4" height="10" fill="#252939"/><rect x="18" y="20" width="4" height="4" fill="#252939"/></svg>
<div class="t" style="left:880.9px;top:321.5px;font-size:40.60px;line-height:40.60px;color:#4766f6;-webkit-text-stroke-width:0.9px;transform:scaleX(0.9668);">Browse</div>
<div style="position:absolute;left:884.0px;top:390.0px;width:126.0px;height:6.0px;background:#4766f6;border-radius:3px;"></div>
<div style="position:absolute;left:1010.0px;top:394.0px;width:2432.0px;height:2.0px;background:#dfe0e7;"></div>
<div class="t" style="left:1076.0px;top:321.5px;font-size:40.60px;line-height:40.60px;color:#6f7389;-webkit-text-stroke-width:0.4px;transform:scaleX(0.9633);">Configuration</div>
<div class="t" style="left:1373.1px;top:321.5px;font-size:40.60px;line-height:40.60px;color:#6f7389;-webkit-text-stroke-width:0.4px;transform:scaleX(0.8939);">Replicas</div>
<div class="t" style="left:1574.1px;top:321.5px;font-size:40.60px;line-height:40.60px;color:#6f7389;-webkit-text-stroke-width:0.4px;transform:scaleX(0.8989);">Logs</div>
<div class="t" style="left:1716.4px;top:321.5px;font-size:40.60px;line-height:40.60px;color:#6f7389;-webkit-text-stroke-width:0.4px;transform:scaleX(0.8957);">Stats</div>
<div class="t" style="left:1863.2px;top:321.5px;font-size:40.60px;line-height:40.60px;color:#6f7389;-webkit-text-stroke-width:0.4px;transform:scaleX(0.9182);">UI Demos</div>
<div style="position:absolute;left:884.0px;top:458.0px;width:383.0px;height:120.0px;background:linear-gradient(#ffffff,#f1f2f6);border:2px solid #d9dbe3;border-radius:5px 0 0 5px;box-sizing:border-box;box-shadow:0 2px 2px rgba(0,0,0,.06);"></div>
<div class="t" style="left:913.9px;top:497.4px;font-size:41.30px;line-height:41.30px;color:#23263b;-webkit-text-stroke-width:0.25px;transform:scaleX(0.8956);">Search</div>
<div style="position:absolute;left:1266.0px;top:458.0px;width:2022.0px;height:121.0px;background:#fff;border:2px solid #dcdee5;border-left:none;border-radius:0 5px 5px 0;box-sizing:border-box;"></div>
<div class="t" style="left:1394.1px;top:497.4px;font-size:41.30px;line-height:41.30px;color:#979bb0;-webkit-text-stroke-width:0.4px;transform:scaleX(0.8869);">Search</div>
<div class="t" style="left:2858.7px;top:500.0px;font-size:40.00px;line-height:40.00px;color:#7f8395;-webkit-text-stroke-width:0.3px;transform:scaleX(0.9476);"><span style="font-weight:bold;color:#6a6e80">4</span> hits matching in 2 ms</div>
<div style="position:absolute;left:3321.0px;top:458.0px;width:121.0px;height:121.0px;background:linear-gradient(#ffffff,#eceef3);border:2px solid #dadce4;border-radius:6px;box-sizing:border-box;box-shadow:0 2px 3px rgba(0,0,0,.07);"></div>
<div class="t" style="left:955.6px;top:664.0px;font-size:40.00px;line-height:40.00px;color:#23263b;-webkit-text-stroke-width:0.25px;transform:scaleX(0.9499);">Add query parameter</div>
<div style="position:absolute;left:1363.0px;top:651.6px;width:739.0px;height:60.8px;background:#4c66fc;border-radius:31px;"></div>
<div class="t" style="left:1395.2px;top:663.8px;font-size:32.50px;line-height:32.50px;color:#fff;-webkit-text-stroke-width:1.3px;transform:scaleX(0.9778);">distancesTo.-KaaduxtK5E3ICOYHFUY.Km...</div>
<div class="t" style="left:2121.1px;top:663.5px;font-size:40.60px;line-height:40.60px;color:#4f6cf5;-webkit-text-stroke-width:0.4px;transform:scaleX(0.9124);">Clear all</div>
<div class="t" style="left:3095.5px;top:661.7px;font-size:39.40px;line-height:39.40px;color:#1e2134;-webkit-text-stroke-width:0.9px;transform:scaleX(0.9846);">Preview</div>
<div style="position:absolute;left:3284.5px;top:652.0px;width:2.5px;height:59.0px;background:#e0e1e8;"></div>
<div class="t" style="left:3339.2px;top:661.7px;font-size:39.40px;line-height:39.40px;color:#8b8fa3;-webkit-text-stroke-width:0.4px;transform:scaleX(0.8966);">Raw</div>
<div class="t" style="left:881.1px;top:814.0px;font-size:44.00px;line-height:44.00px;color:#1f2236;-webkit-text-stroke-width:0.9px;">usedIn.age</div>
<div class="t" style="left:880.4px;top:894.2px;font-size:38.60px;line-height:38.60px;color:#2a2d40;-webkit-text-stroke-width:0.2px;transform:scaleX(1.0300);">.unknown</div>
<div class="t" style="left:1379.2px;top:894.3px;font-size:38.50px;line-height:38.50px;color:#6d7082;-webkit-text-stroke-width:0.3px;transform:scaleX(0.9772);">4</div>
<div class="t" style="left:881.0px;top:1081.6px;font-size:44.00px;line-height:44.00px;color:#1f2236;-webkit-text-stroke-width:0.9px;transform:scaleX(1.0323);">usedIn.century</div>
<div class="t" style="left:880.4px;top:1162.2px;font-size:38.60px;line-height:38.60px;color:#2a2d40;-webkit-text-stroke-width:0.2px;transform:scaleX(1.0300);">.unknown</div>
<div class="t" style="left:1379.2px;top:1162.3px;font-size:38.50px;line-height:38.50px;color:#6d7082;-webkit-text-stroke-width:0.3px;transform:scaleX(0.9772);">4</div>
<div class="t" style="left:880.5px;top:1351.3px;font-size:44.00px;line-height:44.00px;color:#1f2236;-webkit-text-stroke-width:0.9px;transform:scaleX(0.9848);">Region.value.Egypt</div>
<div class="t" style="left:883.4px;top:1431.2px;font-size:38.60px;line-height:38.60px;color:#2a2d40;-webkit-text-stroke-width:0.2px;transform:scaleX(1.0612);">true</div>
<div class="t" style="left:1377.9px;top:1431.3px;font-size:38.50px;line-height:38.50px;color:#6d7082;-webkit-text-stroke-width:0.3px;transform:scaleX(1.0846);">2</div>
<div class="t" style="left:880.5px;top:1618.2px;font-size:44.00px;line-height:44.00px;color:#1f2236;-webkit-text-stroke-width:0.9px;transform:scaleX(0.9948);">Region.value.Africa</div>
<div class="t" style="left:883.4px;top:1699.2px;font-size:38.60px;line-height:38.60px;color:#2a2d40;-webkit-text-stroke-width:0.2px;transform:scaleX(1.0612);">true</div>
<div class="t" style="left:1379.2px;top:1699.3px;font-size:38.50px;line-height:38.50px;color:#6d7082;-webkit-text-stroke-width:0.3px;transform:scaleX(0.9772);">4</div>
<div class="t" style="left:880.5px;top:1888.6px;font-size:44.00px;line-height:44.00px;color:#1f2236;-webkit-text-stroke-width:0.9px;">Region.value.Magreb</div>
<div class="t" style="left:883.4px;top:1970.2px;font-size:38.60px;line-height:38.60px;color:#2a2d40;-webkit-text-stroke-width:0.2px;transform:scaleX(1.0612);">true</div>
<div class="t" style="left:1377.9px;top:1970.3px;font-size:38.50px;line-height:38.50px;color:#6d7082;-webkit-text-stroke-width:0.3px;transform:scaleX(1.0846);">2</div>
<div class="t" style="left:881.7px;top:2156.6px;font-size:44.00px;line-height:44.00px;color:#1f2236;-webkit-text-stroke-width:0.9px;transform:scaleX(1.0339);">CurrentName.centainty</div>
<svg style="position:absolute;left:1220.0px;top:502.5px;" width="18.0" height="34.0" viewBox="0 0 18 34"><path d="M0 13L9 0L18 13Z M0 21L9 34L18 21Z" fill="#23263b"/></svg>
<svg style="position:absolute;left:1314.0px;top:504.0px;" width="32.0" height="29.0" viewBox="0 0 32 29"><circle cx="11.5" cy="11.5" r="9" fill="none" stroke="#6f7389" stroke-width="3.2"/><path d="M18 18L30 28" stroke="#6f7389" stroke-width="3.6"/></svg>
<svg style="position:absolute;left:3364.0px;top:494.0px;" width="34.0" height="47.0" viewBox="0 0 34 47"><rect x="10" y="0" width="14" height="28" rx="7" fill="#6b7089"/><path d="M3 20Q3 35 17 35Q31 35 31 20" fill="none" stroke="#6b7089" stroke-width="3.5"/><rect x="15" y="34" width="4" height="13" fill="#6b7089"/></svg>
<svg style="position:absolute;left:883.0px;top:655.0px;" width="51.0" height="52.0" viewBox="0 0 51 52"><circle cx="25.5" cy="26" r="25.5" fill="#6c7086"/><path d="M25.5 14V38M13.5 26H37.5" stroke="#fff" stroke-width="3"/></svg>
<svg style="position:absolute;left:2052.0px;top:675.0px;" width="19.0" height="17.0" viewBox="0 0 19 17"><path d="M1.5 1L17.5 16M17.5 1L1.5 16" stroke="#fff" stroke-width="2.6"/></svg>
<div style="position:absolute;left:1521.0px;top:821.7px;width:1924.5px;height:744.3px;background:#fff;border:3px solid #e7e9ee;border-radius:5px;box-sizing:border-box;box-shadow:0 3px 4px rgba(20,25,45,.07);"></div>
<div class="t" style="left:1896.0px;top:896.0px;font-size:37.70px;line-height:37.70px;color:#262a3d;-webkit-text-stroke-width:0.55px;transform:scaleX(1.0593);">CurrentName:</div>
<div class="t" style="left:2014.9px;top:990.0px;font-size:37.70px;line-height:37.70px;color:#262a3d;-webkit-text-stroke-width:0.55px;transform:scaleX(1.0124);">Region:</div>
<div class="t" style="left:1929.4px;top:1085.0px;font-size:37.70px;line-height:37.70px;color:#262a3d;-webkit-text-stroke-width:0.55px;transform:scaleX(1.0366);">distancesTo:</div>
<div class="t" style="left:2017.4px;top:1179.0px;font-size:37.70px;line-height:37.70px;color:#262a3d;-webkit-text-stroke-width:0.55px;transform:scaleX(1.0440);">usedIn:</div>
<div class="t" style="left:1990.4px;top:1273.6px;font-size:37.70px;line-height:37.70px;color:#262a3d;-webkit-text-stroke-width:0.55px;transform:scaleX(1.0499);">objectID:</div>
<svg style="position:absolute;left:2180.0px;top:905.0px;" width="20.0" height="21.0" viewBox="0 0 20 21"><path d="M0 0L19 10.5L0 21Z" fill="#9a9da8"/></svg>
<svg style="position:absolute;left:2180.0px;top:999.0px;" width="20.0" height="21.0" viewBox="0 0 20 21"><path d="M0 0L19 10.5L0 21Z" fill="#9a9da8"/></svg>
<svg style="position:absolute;left:2180.0px;top:1094.0px;" width="20.0" height="21.0" viewBox="0 0 20 21"><path d="M0 0L19 10.5L0 21Z" fill="#9a9da8"/></svg>
<svg style="position:absolute;left:2180.0px;top:1188.0px;" width="20.0" height="21.0" viewBox="0 0 20 21"><path d="M0 0L19 10.5L0 21Z" fill="#9a9da8"/></svg>
<div style="position:absolute;left:2205px;top:868.0px;width:1175px;height:90px;overflow:hidden;"><div class="t" style="left:17.4px;top:60px;margin-top:-32.98px;font-size:38.8px;line-height:38.8px;transform:scaleX(0.9696);color:#262a3e;-webkit-text-stroke-width:0.15px"><span style="color:#a3a6b4">{ </span><span style="color:#262a3e">centainty</span><span style="color:#a3a6b4">: </span><span style="color:#9497a5">&quot;.certain&quot;</span><span style="color:#a3a6b4">, </span><span style="color:#262a3e">value</span><span style="color:#a3a6b4">: { </span><span style="color:#262a3e">centainty</span><span style="color:#a3a6b4">: </span><span style="color:#9497a5">&quot;.certain&quot;</span><span style="color:#a3a6b4">, </span><span style="color:#262a3e">value</span><span style="color:#a3a6b4">: </span><span style="color:#9497a5">&quot;.certain&quot;</span></div></div>
<div style="position:absolute;left:2205px;top:962.0px;width:1175px;height:90px;overflow:hidden;"><div class="t" style="left:17.4px;top:60px;margin-top:-32.98px;font-size:38.8px;line-height:38.8px;transform:scaleX(0.9666);color:#262a3e;-webkit-text-stroke-width:0.15px"><span style="color:#a3a6b4">{ </span><span style="color:#262a3e">centainty</span><span style="color:#a3a6b4">: </span><span style="color:#9497a5">&quot;.certain&quot;</span><span style="color:#a3a6b4">, </span><span style="color:#262a3e">value</span><span style="color:#a3a6b4">: { </span><span style="color:#262a3e">Africa</span><span style="color:#a3a6b4">: </span><span style="color:#3a4a6c">true</span><span style="color:#a3a6b4">, </span><span style="color:#262a3e">Egypt</span><span style="color:#a3a6b4">: </span><span style="color:#3a4a6c">true</span><span style="color:#a3a6b4">, </span><span style="color:#262a3e">Upper Egypt</span><span style="color:#a3a6b4">: </span><span style="color:#3a4a6c">true</span></div></div>
<div style="position:absolute;left:2205px;top:1057.0px;width:1175px;height:90px;overflow:hidden;"><div class="t" style="left:17.5px;top:60px;margin-top:-32.98px;font-size:38.8px;line-height:38.8px;transform:scaleX(0.9408);color:#262a3e;-webkit-text-stroke-width:0.15px"><span style="color:#a3a6b4">{ </span><span style="color:#262a3e">-Kaaduxbnh1bhxuHivJk</span><span style="color:#a3a6b4">: { </span><span style="color:#262a3e">CalculatedIn</span><span style="color:#a3a6b4">: </span><span style="color:#9497a5">&quot;days on camelback&quot;</span><span style="color:#a3a6b4">, </span><span style="color:#262a3e">KmDistance</span><span style="color:#a3a6b4">: </span><span style="color:#9497a5">&quot;1200&quot;</span></div></div>
<div style="position:absolute;left:2205px;top:1151.0px;width:1175px;height:90px;overflow:hidden;"><div class="t" style="left:17.4px;top:60px;margin-top:-32.98px;font-size:38.8px;line-height:38.8px;transform:scaleX(0.9717);color:#262a3e;-webkit-text-stroke-width:0.15px"><span style="color:#a3a6b4">{ </span><span style="color:#262a3e">age</span><span style="color:#a3a6b4">: </span><span style="color:#9497a5">&quot;.unknown&quot;</span><span style="color:#a3a6b4">, </span><span style="color:#262a3e">century</span><span style="color:#a3a6b4">: </span><span style="color:#9497a5">&quot;.unknown&quot;</span><span style="color:#a3a6b4">, </span><span style="color:#262a3e">century-half</span><span style="color:#a3a6b4">: </span><span style="color:#9497a5">&quot;.unknown&quot;</span><span style="color:#a3a6b4">, </span><span style="color:#262a3e">century-quarter</span></div></div>
<div class="t" style="left:2221.5px;top:1272.6px;font-size:38.80px;line-height:38.80px;color:#23263b;-webkit-text-stroke-width:1.3px;transform:scaleX(0.9636);"><span style="color:#9a9dab;-webkit-text-stroke-width:0">"</span>-Kaaduy1zzHORZfIpunY<span style="color:#9a9dab;-webkit-text-stroke-width:0">"</span></div>
<div style="position:absolute;left:3178.0px;top:888.0px;width:202.0px;height:201.0px;background:#fff;border:2px solid #c7c9d5;border-radius:2px;box-sizing:border-box;"></div>
<svg style="position:absolute;left:3243.0px;top:952.0px;" width="72.0" height="66.0" viewBox="0 0 72 66"><path fill="#6b6e7b" d="M20 8 L26 0 H46 L52 8 H66 Q72 8 72 14 V60 Q72 66 66 66 H6 Q0 66 0 60 V14 Q0 8 6 8Z"/><circle cx="36" cy="36" r="16" fill="none" stroke="#fff" stroke-width="6"/></svg>
<div class="t" style="left:1583.0px;top:1455.5px;font-size:40.60px;line-height:40.60px;color:#4f6cf5;-webkit-text-stroke-width:0.4px;transform:scaleX(0.9312);">Show + 16 attributes</div>
<svg style="position:absolute;left:1948.5px;top:1467.6px;" width="20.0" height="15.0" viewBox="0 0 20 15"><path d="M0 0H19.5L9.75 15Z" fill="#4f6cf5"/></svg>
<div style="position:absolute;left:1521.0px;top:1621.5px;width:1924.5px;height:641.0px;background:#fff;border:3px solid #e7e9ee;border-radius:5px;box-sizing:border-box;box-shadow:0 3px 4px rgba(20,25,45,.07);"></div>
<div class="t" style="left:1896.0px;top:1696.8px;font-size:37.70px;line-height:37.70px;color:#262a3d;-webkit-text-stroke-width:0.55px;transform:scaleX(1.0593);">CurrentName:</div>
<div class="t" style="left:2014.9px;top:1791.5px;font-size:37.70px;line-height:37.70px;color:#262a3d;-webkit-text-stroke-width:0.55px;transform:scaleX(1.0124);">Region:</div>
<div class="t" style="left:1929.4px;top:1886.0px;font-size:37.70px;line-height:37.70px;color:#262a3d;-webkit-text-stroke-width:0.55px;transform:scaleX(1.0366);">distancesTo:</div>
<div class="t" style="left:2017.4px;top:1980.4px;font-size:37.70px;line-height:37.70px;color:#262a3d;-webkit-text-stroke-width:0.55px;transform:scaleX(1.0440);">usedIn:</div>
<div class="t" style="left:1990.4px;top:2076.0px;font-size:37.70px;line-height:37.70px;color:#262a3d;-webkit-text-stroke-width:0.55px;transform:scaleX(1.0499);">objectID:</div>
<svg style="position:absolute;left:2180.0px;top:1705.8px;" width="20.0" height="21.0" viewBox="0 0 20 21"><path d="M0 0L19 10.5L0 21Z" fill="#9a9da8"/></svg>
<svg style="position:absolute;left:2180.0px;top:1800.5px;" width="20.0" height="21.0" viewBox="0 0 20 21"><path d="M0 0L19 10.5L0 21Z" fill="#9a9da8"/></svg>
<svg style="position:absolute;left:2180.0px;top:1895.0px;" width="20.0" height="21.0" viewBox="0 0 20 21"><path d="M0 0L19 10.5L0 21Z" fill="#9a9da8"/></svg>
<svg style="position:absolute;left:2180.0px;top:1989.4px;" width="20.0" height="21.0" viewBox="0 0 20 21"><path d="M0 0L19 10.5L0 21Z" fill="#9a9da8"/></svg>
<div style="position:absolute;left:2205px;top:1668.8px;width:1175px;height:90px;overflow:hidden;"><div class="t" style="left:17.4px;top:60px;margin-top:-32.98px;font-size:38.8px;line-height:38.8px;transform:scaleX(0.9708);color:#262a3e;-webkit-text-stroke-width:0.15px"><span style="color:#a3a6b4">{ </span><span style="color:#262a3e">centainty</span><span style="color:#a3a6b4">: </span><span style="color:#9497a5">&quot;.certain&quot;</span><span style="color:#a3a6b4">, </span><span style="color:#262a3e">value</span><span style="color:#a3a6b4">: </span><span style="color:#9497a5">&quot;.null&quot;</span><span style="color:#a3a6b4"> }</span></div></div>
<div style="position:absolute;left:2205px;top:1763.5px;width:1175px;height:90px;overflow:hidden;"><div class="t" style="left:17.4px;top:60px;margin-top:-32.98px;font-size:38.8px;line-height:38.8px;transform:scaleX(0.9741);color:#262a3e;-webkit-text-stroke-width:0.15px"><span style="color:#a3a6b4">{ </span><span style="color:#262a3e">centainty</span><span style="color:#a3a6b4">: </span><span style="color:#9497a5">&quot;.probable&quot;</span><span style="color:#a3a6b4">, </span><span style="color:#262a3e">value</span><span style="color:#a3a6b4">: { </span><span style="color:#262a3e">Africa</span><span style="color:#a3a6b4">: </span><span style="color:#3a4a6c">true</span><span style="color:#a3a6b4">, </span><span style="color:#262a3e">Magreb</span><span style="color:#a3a6b4">: </span><span style="color:#3a4a6c">true</span><span style="color:#a3a6b4"> }</span></div></div>
<div style="position:absolute;left:2205px;top:1858.0px;width:1175px;height:90px;overflow:hidden;"><div class="t" style="left:17.5px;top:60px;margin-top:-32.98px;font-size:38.8px;line-height:38.8px;transform:scaleX(0.9205);color:#262a3e;-webkit-text-stroke-width:0.15px"><span style="color:#a3a6b4">{ </span><span style="color:#262a3e">-KaaduxVGlCLNIXv4UQX</span><span style="color:#a3a6b4">: { </span><span style="color:#262a3e">CalculatedIn</span><span style="color:#a3a6b4">: </span><span style="color:#9497a5">&quot;days on camelback&quot;</span><span style="color:#a3a6b4">, </span><span style="color:#262a3e">KmDistance</span><span style="color:#a3a6b4">: </span><span style="color:#9497a5">&quot;1200&quot;</span></div></div>
<div style="position:absolute;left:2205px;top:1952.4px;width:1175px;height:90px;overflow:hidden;"><div class="t" style="left:17.4px;top:60px;margin-top:-32.98px;font-size:38.8px;line-height:38.8px;transform:scaleX(0.9699);color:#262a3e;-webkit-text-stroke-width:0.15px"><span style="color:#a3a6b4">{ </span><span style="color:#262a3e">age</span><span style="color:#a3a6b4">: </span><span style="color:#9497a5">&quot;.unknown&quot;</span><span style="color:#a3a6b4">, </span><span style="color:#262a3e">century</span><span style="color:#a3a6b4">: </span><span style="color:#9497a5">&quot;.unknown&quot;</span><span style="color:#a3a6b4">, </span><span style="color:#262a3e">century-half</span><span style="color:#a3a6b4">: </span><span style="color:#9497a5">&quot;.unknown&quot;</span><span style="color:#a3a6b4">, </span><span style="color:#262a3e">century-quarter</span></div></div>
<div class="t" style="left:2221.5px;top:2075.0px;font-size:38.80px;line-height:38.80px;color:#23263b;-webkit-text-stroke-width:1.3px;transform:scaleX(0.9666);"><span style="color:#9a9dab;-webkit-text-stroke-width:0">"</span>-KaaduxyAEviuBpf5gY0<span style="color:#9a9dab;-webkit-text-stroke-width:0">"</span></div>
<div style="position:absolute;left:3178.0px;top:1687.0px;width:202.0px;height:201.0px;background:#fff;border:2px solid #c7c9d5;border-radius:2px;box-sizing:border-box;"></div>
<svg style="position:absolute;left:3243.0px;top:1751.0px;" width="72.0" height="66.0" viewBox="0 0 72 66"><path fill="#6b6e7b" d="M20 8 L26 0 H46 L52 8 H66 Q72 8 72 14 V60 Q72 66 66 66 H6 Q0 66 0 60 V14 Q0 8 6 8Z"/><circle cx="36" cy="36" r="16" fill="none" stroke="#fff" stroke-width="6"/></svg>
<svg style="position:absolute;left:3113.5px;top:1444.5px;" width="44.0" height="37.0" viewBox="0 0 44 37"><path fill="#6b7089" d="M4 0H40Q44 0 44 5V10Q44 17 37 17H33Q30 20 27 21V27H17V21Q14 20 11 17H7Q0 17 0 10V5Q0 0 4 0ZM5 6V10Q5 12 8 12H9V6ZM35 6V12H36Q39 12 39 10V6Z"/><rect x="13" y="32" width="18" height="5" fill="#6b7089"/></svg>
<div style="position:absolute;left:3198.6px;top:1421.5px;width:79.5px;height:80.3px;background:linear-gradient(#ffffff,#edeef2);border:2px solid #d8dae2;border-radius:5px;box-sizing:border-box;box-shadow:0 2px 2px rgba(0,0,0,.06);"></div>
<div style="position:absolute;left:3300.0px;top:1421.5px;width:79.5px;height:80.3px;background:linear-gradient(#ffffff,#edeef2);border:2px solid #d8dae2;border-radius:5px;box-sizing:border-box;box-shadow:0 2px 2px rgba(0,0,0,.06);"></div>
<svg style="position:absolute;left:3224.7px;top:1445.4px;" width="26.0" height="32.0" viewBox="0 0 26 32"><rect x="0" y="3" width="26" height="4" fill="#6b7089"/><rect x="9" y="0" width="8" height="4" rx="1" fill="#6b7089"/><path d="M3 9H23L22 29Q22 32 19 32H7Q4 32 4 29Z" fill="#6b7089"/></svg>
<svg style="position:absolute;left:3323.8px;top:1445.4px;" width="33.0" height="33.0" viewBox="0 0 33 33"><path d="M3 33Q0 33 0 30L2 26L23 5L28 10L7 31Z" fill="#6b7089"/><path d="M25 3L28 0L33 5L30 8Z" fill="#6b7089"/></svg>
<div style="position:absolute;left:34.0px;top:2197.0px;width:3687.0px;height:3.0px;background:#c9c9cc;"></div>
<div style="position:absolute;left:34.0px;top:2200.0px;width:3687.0px;height:127.0px;background:#fff;"></div>
<svg style="position:absolute;left:89.0px;top:2240.0px;" width="31.0" height="40.0" viewBox="0 0 31 40"><path d="M2 1H20L29 10V38H2Z" fill="#fbfbfb" stroke="#d5d5d5" stroke-width="1.5"/><rect x="7" y="9" width="18" height="6" fill="#e9b27a"/><rect x="7" y="13" width="18" height="9" fill="#4d9be6"/><rect x="13" y="20" width="13" height="5" fill="#555"/><rect x="9" y="30" width="14" height="3" fill="#666"/></svg>
<div class="t" style="left:155.6px;top:2249.0px;font-size:37.30px;line-height:37.30px;color:#3c4043;-webkit-text-stroke-width:0.3px;transform:scaleX(1.0054);">IMG_7765.jpg</div>
<svg style="position:absolute;left:550.5px;top:2256.0px;" width="25.0" height="15.0" viewBox="0 0 25 15"><path d="M1.5 13.5L12.5 2.5L23.5 13.5" fill="none" stroke="#5f6368" stroke-width="3"/></svg>
<div style="position:absolute;left:621.0px;top:2216.0px;width:2.0px;height:93.0px;background:#dadce0;"></div>
<svg style="position:absolute;left:670.5px;top:2240.0px;" width="31.0" height="40.0" viewBox="0 0 31 40"><path d="M2 1H20L29 10V38H2Z" fill="#fbfbfb" stroke="#d5d5d5" stroke-width="1.5"/><rect x="7" y="9" width="18" height="6" fill="#e9b27a"/><rect x="7" y="13" width="18" height="9" fill="#4d9be6"/><rect x="13" y="20" width="13" height="5" fill="#555"/><rect x="9" y="30" width="14" height="3" fill="#666"/></svg>
<div class="t" style="left:737.1px;top:2249.0px;font-size:37.30px;line-height:37.30px;color:#3c4043;-webkit-text-stroke-width:0.3px;transform:scaleX(1.0054);">IMG_7764.jpg</div>
<svg style="position:absolute;left:1132.0px;top:2256.0px;" width="25.0" height="15.0" viewBox="0 0 25 15"><path d="M1.5 13.5L12.5 2.5L23.5 13.5" fill="none" stroke="#5f6368" stroke-width="3"/></svg>
<div style="position:absolute;left:1202.5px;top:2216.0px;width:2.0px;height:93.0px;background:#dadce0;"></div>
<svg style="position:absolute;left:1252.0px;top:2240.0px;" width="31.0" height="40.0" viewBox="0 0 31 40"><path d="M2 1H20L29 10V38H2Z" fill="#fbfbfb" stroke="#d5d5d5" stroke-width="1.5"/><rect x="7" y="9" width="18" height="6" fill="#e9b27a"/><rect x="7" y="13" width="18" height="9" fill="#4d9be6"/><rect x="13" y="20" width="13" height="5" fill="#555"/><rect x="9" y="30" width="14" height="3" fill="#666"/></svg>
<div class="t" style="left:1318.6px;top:2249.0px;font-size:37.30px;line-height:37.30px;color:#3c4043;-webkit-text-stroke-width:0.3px;transform:scaleX(1.0054);">IMG_7763.jpg</div>
<svg style="position:absolute;left:1713.5px;top:2256.0px;" width="25.0" height="15.0" viewBox="0 0 25 15"><path d="M1.5 13.5L12.5 2.5L23.5 13.5" fill="none" stroke="#5f6368" stroke-width="3"/></svg>
<div style="position:absolute;left:1784.0px;top:2216.0px;width:2.0px;height:93.0px;background:#dadce0;"></div>
<svg style="position:absolute;left:1833.5px;top:2240.0px;" width="31.0" height="40.0" viewBox="0 0 31 40"><path d="M2 1H20L29 10V38H2Z" fill="#fbfbfb" stroke="#d5d5d5" stroke-width="1.5"/><rect x="7" y="9" width="18" height="6" fill="#e9b27a"/><rect x="7" y="13" width="18" height="9" fill="#4d9be6"/><rect x="13" y="20" width="13" height="5" fill="#555"/><rect x="9" y="30" width="14" height="3" fill="#666"/></svg>
<div class="t" style="left:1900.1px;top:2249.0px;font-size:37.30px;line-height:37.30px;color:#3c4043;-webkit-text-stroke-width:0.3px;transform:scaleX(1.0054);">IMG_7762.jpg</div>
<svg style="position:absolute;left:2295.0px;top:2256.0px;" width="25.0" height="15.0" viewBox="0 0 25 15"><path d="M1.5 13.5L12.5 2.5L23.5 13.5" fill="none" stroke="#5f6368" stroke-width="3"/></svg>
<div style="position:absolute;left:2365.5px;top:2216.0px;width:2.0px;height:93.0px;background:#dadce0;"></div>
<div style="position:absolute;left:3335.4px;top:2217.7px;width:290.3px;height:83.7px;background:#fff;border:2px solid #c4c6ca;border-radius:10px;box-sizing:border-box;"></div>
<div class="t" style="left:3373.9px;top:2242.8px;font-size:32.50px;line-height:32.50px;color:#3c4043;-webkit-text-stroke-width:0.7px;transform:scaleX(1.0574);">Mostrar todas</div>
<svg style="position:absolute;left:3661.0px;top:2249.0px;" width="23.0" height="23.0" viewBox="0 0 23 23"><path d="M1.5 1.5L21.5 21.5M21.5 1.5L1.5 21.5" stroke="#5f6368" stroke-width="3"/></svg>
<svg style="position:absolute;left:34.0px;top:2313.0px;" width="12.0" height="14.0" viewBox="0 0 12 14"><path d="M0 0L12 14H0Z" fill="#000"/></svg>
<svg style="position:absolute;left:3708.0px;top:2314.0px;" width="13.0" height="13.0" viewBox="0 0 13 13"><path d="M13 0V13H0Z" fill="#000"/></svg>
</body></html>
